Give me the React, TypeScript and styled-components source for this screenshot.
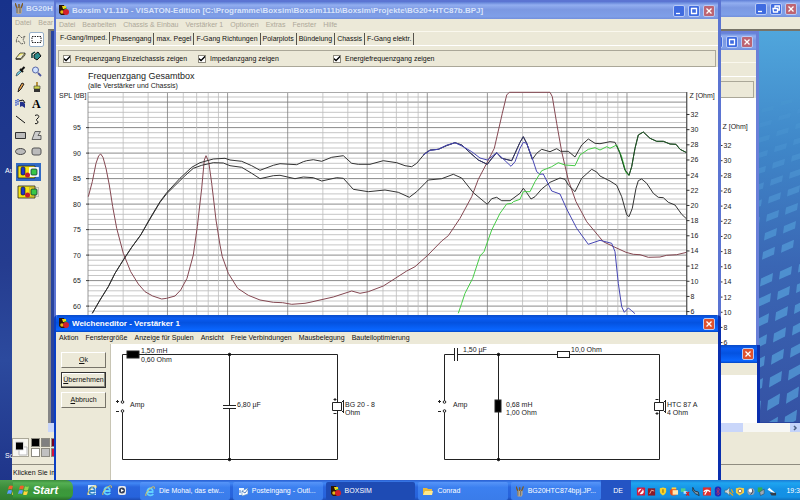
import React from "react";
import styled, { createGlobalStyle, css } from "styled-components";

const GlobalStyle = createGlobalStyle`
  * { box-sizing: border-box; }
  body { margin: 0; font: 7px/10px "Liberation Sans", Arial, sans-serif; color: #111; overflow: hidden; }
  button { font: inherit; padding: 0; margin: 0; border: 0; background: none; color: inherit; }
  svg { display: block; }
  svg text { font-family: "Liberation Sans", Arial, sans-serif; }
`;

const face = "#ece9d8";

const Screen = styled.main`
  display: flex;
  flex-direction: column;
  height: 100vh;
  background: #3a5bb0;
`;

const Desktop = styled.div`
  position: relative;
  display: flex;
  flex: 1;
  min-height: 0;
  overflow: hidden;
`;

const DesktopStrip = styled.div`
  display: flex;
  flex-direction: column;
  justify-content: space-between;
  flex: 0 0 12px;
  padding: 166px 0 19px 5px;
  overflow: hidden;
  color: #fff;
  background: linear-gradient(#17328b, #253c8f 55%, #2c4a9e 75%, #1f358a);
`;

const TitleBar = styled.header<{ $active?: boolean; $height: number }>`
  display: flex;
  align-items: center;
  gap: 3px;
  height: ${(p) => p.$height}px;
  padding: 0 3px;
  overflow: hidden;
  white-space: nowrap;
  color: ${(p) => (p.$active ? "#fff" : "#d8e4fb")};
  font-size: 8px;
  font-weight: bold;
  background: ${(p) =>
    p.$active
      ? "linear-gradient(#0a4bc8, #0a5cf2 20%, #0452e0 45%, #0a66ff 88%, #0346c4)"
      : "linear-gradient(#5f7fd6, #92aef0 18%, #7b98e2 45%, #7f9fe8 85%, #728fdc)"};
`;

const Title = styled.h1`
  flex: 1;
  margin: 0;
  overflow: hidden;
  font-size: inherit;
  line-height: 12px;
`;

const CaptionButton = styled.button<{ $kind: "blue" | "red" | "dimRed" }>`
  display: grid;
  place-items: center;
  flex: 0 0 12px;
  height: 12px;
  border: 1px solid #b9caf5;
  border-radius: 2px;
  background: ${(p) => ({ blue: "#3f6be0", red: "#e0512c", dimRed: "#bd6472" })[p.$kind]};
`;

const MenuBar = styled.nav<{ $dim?: boolean }>`
  display: flex;
  align-items: center;
  gap: 7px;
  height: 12px;
  padding: 0 3px;
  overflow: hidden;
  white-space: nowrap;
  color: ${(p) => (p.$dim ? "#aca899" : "#111")};
  background: ${face};
`;

const PaintWindow = styled.section`
  display: flex;
  flex: 1;
  flex-direction: column;
  min-width: 0;
  background: ${face};
`;

const PaintBody = styled.div`
  display: flex;
  flex: 1;
  min-height: 0;
`;

const Toolbox = styled.div`
  display: flex;
  flex-direction: column;
  align-items: center;
  flex: 0 0 36px;
  padding: 3px 3px 0 0;
`;

const ToolGrid = styled.div`
  display: grid;
  grid-template-columns: 15px 15px;
  grid-auto-rows: 15px;
  gap: 1px;
  margin-bottom: 4px;
`;

const Tool = styled.button<{ $selected?: boolean }>`
  display: grid;
  place-items: center;
  ${(p) => p.$selected && css`background: #fff; border: 1px solid #98b0c8; border-radius: 2px;`}
`;

const ToolOption = styled.button<{ $selected?: boolean }>`
  display: grid;
  place-items: center;
  width: 25px;
  height: 18px;
  margin-bottom: 2px;
  background: ${(p) => (p.$selected ? "#316ac5" : "transparent")};
`;

const CanvasColumn = styled.div`
  display: flex;
  flex: 1;
  flex-direction: column;
  min-width: 0;
`;

const Canvas = styled.div`
  position: relative;
  flex: 1;
  overflow: hidden;
  border-left: 3px solid #858585;
  border-top: 2px solid #777468;
  background: #29449d;
`;

const Wallpaper = styled.svg`
  position: absolute;
  top: 0;
  right: 0;
  width: 42px;
  height: 391px;
`;

const HorizontalScroll = styled.div`
  display: flex;
  justify-content: flex-end;
  height: 9px;
  background: linear-gradient(90deg, #c9d6fa 695px, #f7f7f4 695px);
`;

const ScrollButton = styled.button`
  display: grid;
  place-items: center;
  width: 10px;
  height: 9px;
  background: #c3d3fa;
`;

const PaletteBar = styled.div`
  display: flex;
  align-items: flex-start;
  gap: 2px;
  height: 33px;
  padding: 6px 0 0;
  border-bottom: 1px solid #8f8c80;
`;

const CurrentColors = styled.div`
  width: 17px;
  height: 19px;
  background: #f7f6f0;
  border: 1px solid #aaa798;
`;

const Swatches = styled.div`
  display: grid;
  grid-template-columns: repeat(3, 9px);
  grid-auto-rows: 9px;
  gap: 1px;
`;

const Swatch = styled.button<{ $color: string }>`
  border: 1px solid #8c8a80;
  background: ${(p) => p.$color};
`;

const StatusBar = styled.footer`
  height: 15px;
  padding: 3px 1px;
  overflow: hidden;
  white-space: nowrap;
`;

const AppWindow = styled.section`
  position: absolute;
  top: 0;
  bottom: 0;
  left: 54px;
  right: 79px;
  border: 2px solid #5b74d2;
  border-right-width: 3px;
  background: #fff;
`;

const BackWindow = styled.section`
  position: absolute;
  top: 0;
  bottom: 0;
  left: 42px;
  right: 41px;
  border: 2px solid #6a80d8;
  border-right-width: 3px;
  background: #fff;
`;

const Sheet = styled.div`
  background: ${face};
`;

const Tabs = styled.div`
  display: flex;
  align-items: flex-end;
  height: 15px;
  padding-left: 2px;
  border-top: 1px solid #faf8ee;
  border-bottom: 1px solid #fff;
  overflow: hidden;
`;

const Tab = styled.button<{ $selected?: boolean }>`
  height: 12px;
  padding: 0 2px;
  line-height: 10px;
  white-space: nowrap;
  border-right: 1px solid #55534b;
  ${(p) => p.$selected && css`align-self: flex-start;`}
`;

const Options = styled.div`
  display: flex;
  align-items: center;
  height: 17px;
  margin: 4px 2px 0;
  border: 1px solid #aaa798;
`;

const Option = styled.label<{ $width: number }>`
  display: flex;
  align-items: center;
  gap: 4px;
  flex: 0 1 ${(p) => p.$width}px;
  padding-left: 4px;
  white-space: nowrap;
`;

const Tick = styled.input`
  appearance: none;
  display: grid;
  place-items: center;
  width: 8px;
  height: 8px;
  margin: 0;
  border: 1px solid #8d8a7e;
  background: #fff;
  &:checked::before {
    content: "";
    width: 6px;
    height: 6px;
    background: #000;
    clip-path: polygon(0 40%, 35% 65%, 100% 0, 100% 35%, 35% 100%, 0 70%);
  }
`;

const Drawing = styled.svg`
  width: 100%;
  height: auto;
`;

const AxisDrawing = styled.svg`
  width: 40px;
  height: 250px;
  margin-left: auto;
`;

const EditorWindow = styled.section`
  position: absolute;
  top: 315px;
  bottom: 0;
  left: 54px;
  right: 79px;
  display: flex;
  flex-direction: column;
  border-left: 2px solid #0a3fc4;
  border-right: 3px solid #0a2fae;
  border-radius: 4px 4px 0 0;
  overflow: hidden;
  background: #fff;
`;

const BackEditor = styled.section`
  position: absolute;
  top: 314px;
  bottom: 0;
  left: 42px;
  right: 40px;
  border-right: 3px solid #0a2fae;
  background: #fff;
`;

const EditorBody = styled.div`
  display: flex;
  flex: 1;
  min-height: 0;
`;

const ButtonPanel = styled.div`
  display: flex;
  flex-direction: column;
  gap: 4px;
  flex: 0 0 55px;
  padding: 8px 4px 0 5px;
  border-right: 1px solid #c8c5b4;
  background: ${face};
`;

const PushButton = styled.button<{ $default?: boolean }>`
  height: 16px;
  border: 1px solid;
  border-color: ${(p) => (p.$default ? "#333" : "#fff #77746a #77746a #fff")};
  box-shadow: ${(p) => (p.$default ? "inset -1px -1px #8d8a7e, inset 1px 1px #fff" : "none")};
`;

const CircuitArea = styled.div`
  flex: 1;
  min-width: 0;
`;

const Taskbar = styled.footer`
  display: flex;
  align-items: stretch;
  height: 20px;
  overflow: hidden;
  color: #fff;
  background: linear-gradient(#2a5fd0, #4288f5 15%, #2a66de 35%, #2663dc 85%, #1d4cb4);
`;

const StartEdge = styled.div`
  display: grid;
  place-items: center end;
  flex: 0 0 13px;
  background: linear-gradient(#4fa04e, #3b8c3a 40%, #2f7c30);
`;

const StartButton = styled.button`
  display: flex;
  align-items: center;
  gap: 3px;
  flex: 0 0 60px;
  padding-left: 5px;
  border-radius: 0 7px 7px 0;
  font: italic bold 11px/18px "Liberation Sans", Arial, sans-serif;
  background: linear-gradient(#3a8a3a, #55b053 15%, #3c973b 50%, #3a9a3a 80%, #2a6f2b);
`;

const QuickLaunch = styled.div`
  display: flex;
  align-items: center;
  justify-content: center;
  gap: 5px;
  flex: 0 0 67px;
`;

const Tasks = styled.div`
  display: grid;
  grid-template-columns: repeat(5, minmax(0, 1fr));
  gap: 3px;
  flex: 0 1 461px;
  padding-top: 2px;
`;

const Task = styled.button<{ $active?: boolean }>`
  display: flex;
  align-items: center;
  gap: 4px;
  padding: 0 5px;
  overflow: hidden;
  white-space: nowrap;
  border-radius: 2px;
  background: ${(p) => (p.$active ? "#1e4bb4" : "linear-gradient(#5795f8, #3c80f0 30%, #3a7cea)")};
`;

const Language = styled.button`
  flex: 0 0 30px;
  padding: 2px 0 0 4px;
  background: #2454c4;
`;

const Tray = styled.div`
  display: flex;
  align-items: center;
  gap: 1px;
  flex: 1 0 169px;
  padding: 2px 0 0 5px;
  overflow: hidden;
  white-space: nowrap;
  background: linear-gradient(#1a7ad4, #1fa5f0 15%, #1592e6 45%, #1390e4 85%, #0f72c0);
`;

const Clock = styled.time`
  padding-left: 8px;
`;

/* ---------- icons ---------- */

const BoxsimIcon = () => (
  <svg width="10" height="11" viewBox="0 0 10 11">
    <path d="M0 0h5l1 3v7H2L0 8z" fill="#2a1608" />
    <path d="M3 1h4v3H4z" fill="#f0d818" />
    <circle cx="3" cy="7" r="1.8" fill="#e8b818" />
    <circle cx="7" cy="7" r="3" fill="#d4202c" />
    <path d="M5 4l3-1" stroke="#39a339" />
  </svg>
);

const PaintIcon = () => (
  <svg width="8" height="11" viewBox="0 0 8 11">
    <path d="M1 4h6v5l-1 2H2L1 9z" fill="#b9a88c" />
    <path d="M2 5L0 0M4 5V1M6 5l2-5" stroke="#7d5a22" strokeWidth="1.4" />
    <path d="M2 5v5M5 5v5" stroke="#5c656e" />
  </svg>
);

const IeIcon = ({ box = false }: { box?: boolean }) => (
  <svg width="10" height="11" viewBox="0 0 10 11">
    {box && <path d="M1 0h8v10H1z" fill="#d8ecff" />}
    <path d="M8.5 6H2.7a2.6 2.6 0 1 1 5-.8M8.3 8A3.5 3.5 0 0 1 2 6" fill="none" stroke={box ? "#3484c8" : "#62d0ff"} strokeWidth="1.8" />
    <path d="M1 10C-1 8 7-1 9.4 1c.4.5 0 1.300-.4 2" fill="none" stroke="#f0cb42" strokeWidth=".9" />
  </svg>
);

const FlagIcon = ({ cut = false }: { cut?: boolean }) => (
  <svg width={cut ? 6 : 12} height="12" viewBox={cut ? "0 0 6 12" : "0 0 12 12"}>
    <path d="M2 2q2-1 4 0L5 5.500q-2-1-4 0z" fill="#f0602c" />
    <path d="M7 2.300q2 1 4 0L10 6q-2 1-4 0z" fill="#8fd84c" />
    <path d="M1 6.500q2-1 4 0L4 10q-2-1-4 0z" fill="#5b9dff" />
    <path d="M6 7q2 1 4 0l-1 3.500q-2 1-4 0z" fill="#ffd43a" />
  </svg>
);

const MediaIcon = () => (
  <svg width="10" height="11" viewBox="0 0 10 11">
    <rect x="1" y="1" width="8" height="9" rx="2" fill="#e6e9ee" />
    <circle cx="5" cy="5.500" r="3" fill="#34405a" />
    <path d="M4 4l3 1.500L4 7z" fill="#fff" />
  </svg>
);

const MailIcon = () => (
  <svg width="10" height="11" viewBox="0 0 10 11">
    <path d="M1 2h5v7H1z" fill="#e9f4ff" />
    <path d="M4 5l6-3v6l-6 2z" fill="#fff" stroke="#5d8fc0" strokeWidth=".6" />
    <path d="M2 4v3M4 5l3 2 3-4" stroke="#2c63b4" fill="none" strokeWidth=".8" />
  </svg>
);

const FolderIcon = () => (
  <svg width="10" height="9" viewBox="0 0 10 9">
    <path d="M0 1h4l1 1h4v6H0z" fill="#e8b93c" />
    <path d="M2 4h8L9 8H0z" fill="#ffe98e" />
  </svg>
);

const CaptionGlyph = ({ d }: { d: string }) => (
  <svg width="8" height="8" viewBox="0 0 8 8">
    <path d={d} fill="none" stroke="#fff" strokeWidth="1.3" />
  </svg>
);

const minimizeGlyph = "M1 6.500h4";
const maximizeGlyph = "M1 1.500h6M1.500 1v6M1 6.500h6M6.500 1v6";
const restoreGlyph = "M1 3.500h4.500v3.500H1.500zM3 3V1h4.300v4H6";
const closeGlyph = "M1.500 1.500l5 5M6.500 1.500l-5 5";

const toolGlyphs: { name: string; art: React.ReactNode }[] = [
  { name: "Freihand auswählen", art: <path d="M4 1L2 4 1 8l3-1 2 3 4-1-2-3 2-4-3 2z" fill="none" stroke="#222" strokeDasharray="1.500 1" strokeWidth=".8" /> },
  { name: "Auswählen", art: <path d="M1 2.500h9v6H1z" fill="none" stroke="#222" strokeDasharray="1.500 1" /> },
  { name: "Radierer", art: <path d="M1 8l4-5h5L6 8.500H1zM1 8v1.500h5L10 5V3" fill="#f7ef7a" stroke="#333" strokeWidth=".8" /> },
  { name: "Füllen", art: <g><path d="M3 5l4-3 3 4-4 4-3-2z" fill="#2a8c8c" stroke="#111" /><path d="M1 8V4l3-2" fill="none" stroke="#0b3b3b" strokeWidth="1.500" /></g> },
  { name: "Farbe auswählen", art: <g><path d="M1 10l1-3 4-3 1 1-4 4z" fill="#6fd3e6" stroke="#345" strokeWidth=".7" /><path d="M5 3l3 3M6.500 4l3-3" stroke="#111" strokeWidth="2" /></g> },
  { name: "Lupe", art: <g><circle cx="4.500" cy="4" r="3" fill="#cfe2ff" stroke="#5966a5" /><path d="M7 7l3 3" stroke="#4b55a0" strokeWidth="1.800" /></g> },
  { name: "Stift", art: <path d="M3 10l1-4 3-5 2 1-3 5z" fill="#e8a04a" stroke="#222" /> },
  { name: "Pinsel", art: <g><path d="M5 0h2v4H5z" fill="#b69142" /><path d="M3 4h6v3H3z" fill="#cfd44d" stroke="#333" strokeWidth=".6" /><path d="M3 7h6v3H3z" fill="#333" /></g> },
  { name: "Airbrush", art: <g><path d="M5 4q4-1 5 2v4L7 8 5 9z" fill="#22318c" /><path d="M1 2v6M3 1v6" stroke="#3658d0" strokeWidth="1.500" strokeDasharray="1.500 .6" /><path d="M4 3l4-1 2 3" stroke="#111" fill="none" /></g> },
  { name: "Text", art: <text x="1" y="10" fontSize="12" fontWeight="bold" style={{ fontFamily: "Liberation Serif, serif" }}>A</text> },
  { name: "Linie", art: <path d="M1 2l9 7" stroke="#111" /> },
  { name: "Kurve", art: <path d="M4 1.500C7 0 9 2 7 4L5.500 5.500C5 7 7 6.500 7 8S5.500 10 4 9.500" fill="none" stroke="#111" /> },
  { name: "Rechteck", art: <path d="M.5 2.500h10v6H.500z" fill="#bbb" stroke="#333" /> },
  { name: "Vieleck", art: <path d="M4 1.500h5.500L7 5.500h3v4H1z" fill="#ccc" stroke="#444" strokeWidth=".8" /> },
  { name: "Ellipse", art: <ellipse cx="5.500" cy="5.500" rx="5" ry="3" fill="#bbb" stroke="#444" /> },
  { name: "Abgerundetes Rechteck", art: <rect x="1" y="2" width="9" height="7" rx="2" fill="#bbb" stroke="#555" /> },
];

const ShapesIcon = ({ opaque }: { opaque?: boolean }) => (
  <svg width="23" height="14" viewBox="0 0 23 14">
    <path d="M1 1h17v12H1z" fill="#f7e414" stroke="#222" strokeWidth=".8" />
    <rect x="4" y="2" width="4" height="8" rx="1.500" fill="#1c38c8" stroke="#111" strokeWidth=".6" />
    <path d="M12.500 2.500h9v9h-9z" fill={opaque ? "#fff" : "none"} stroke={opaque ? "#fff" : "#777"} strokeDasharray={opaque ? undefined : "1 1"} strokeWidth=".8" />
    <circle cx="10.500" cy="10" r="2.500" fill="#c81c2c" />
    <rect x="14" y="4" width="6" height="6" rx="1" fill="#38c848" stroke="#133" strokeWidth=".8" />
  </svg>
);

const trayArt: { name: string; art: React.ReactNode }[] = [
  { name: "Audio", art: <g><rect x="1" y="1" width="9" height="9" rx="1" fill="#d11c3c" /><circle cx="5.500" cy="5.500" r="3" fill="#fff" /><path d="M7 3L3 8" stroke="#d11c3c" strokeWidth="2" /></g> },
  { name: "Monitor", art: <g><rect x="1" y="2" width="8" height="8" fill="#8c1c28" /><path d="M3 8l2-4 3 1" stroke="#f5b7a2" /></g> },
  { name: "Sicherheit", art: <g><path d="M2 2l3.500-1L9 2v4q-1 3-3.500 4Q3 9 2 6z" fill="#f6d22c" /><path d="M5.500 3v4" stroke="#775b00" /></g> },
  { name: "Update", art: <g><circle cx="5" cy="6" r="4" fill="#e8501c" /><path d="M4 4h6v5H4z" fill="#ffe7b0" /><path d="M3 2h5" stroke="#ffd23c" strokeWidth="2" /></g> },
  { name: "Netzwerk", art: <g><path d="M1 2h5v4H1z" fill="#4fd08c" /><path d="M4 5h4v3H4z" fill="#b9e4ff" /><path d="M7 6l3 4M10 6L7 10" stroke="#d91c1c" strokeWidth="1.500" /></g> },
  { name: "Gerät", art: <path d="M2 1l2 4 4 1 1 4-4-2-3-3z" fill="#7d98a8" stroke="#234" /> },
  { name: "AntiVir", art: <g><rect x="1" y="1" width="9" height="9" fill="#df2e2e" /><path d="M2 6a4 4 0 0 1 7 0M6 4L3 9" stroke="#fff" strokeWidth="1.300" fill="none" /></g> },
  { name: "Bluetooth", art: <g><rect x="2" y="0" width="7" height="11" rx="3" fill="#1c2cb8" /><path d="M3.500 3.500l4 4-2 2v-8l2 2-4 4" stroke="#c9375c" fill="none" strokeWidth=".8" /></g> },
  { name: "Lautsprecher", art: <g><path d="M1 4h2l3-3v9L3 7H1z" fill="#cfd8dc" stroke="#455" strokeWidth=".5" /><path d="M6 6l4 4M8 3l2 4" stroke="#d9a52c" strokeWidth="1.500" /></g> },
  { name: "Schild", art: <g><path d="M1 2l4-1 5 1v5l-5 3-4-3z" fill="#f1cf48" /><circle cx="5.500" cy="5" r="2" fill="#fff" stroke="#865" /></g> },
  { name: "Wiedergabe", art: <g><circle cx="5.500" cy="5.500" r="4" fill="#8fa0b4" /><circle cx="5" cy="4.500" r="2" fill="#fff" /><path d="M7 3q2 3-2 6" stroke="#445" fill="none" /></g> },
  { name: "Hardware", art: <g><path d="M2 1h5v5H2z" fill="#36ad50" /><path d="M4 6l5-3v5L5 10z" fill="#9aa9b8" stroke="#345" strokeWidth=".6" /></g> },
  { name: "WLAN", art: <g><path d="M1 3l5 3M2 2l7 6" stroke="#fff" strokeWidth="1.500" /><path d="M3 7h7v3H5z" fill="#333c48" /></g> },
];

/* ---------- frequency response chart ---------- */

const decade = 199.7;
const freqX = (hz: number) => 88 + decade * Math.log10(hz / 20);
const splY = (db: number) => 127.6 + (95 - db) * 5.1;
const ohmY = (ohm: number) => 114.5 + (32 - ohm) * 7.58;

const frequencies = [
  20, 30, 40, 50, 60, 70, 80, 90,
  100, 200, 300, 400, 500, 600, 700, 800, 900,
  1000, 2000, 3000, 4000, 5000, 6000, 7000, 8000, 9000,
  10000, 15000, 20000,
].filter((hz) => hz !== 15000);
const strongFrequencies = [20, 50, 100, 200, 500, 1000, 2000, 5000, 10000, 20000];
const levels = Array.from({ length: 43 }, (_, i) => 101 - i);

/* Each run holds an origin and points measured in thirds of a chart unit. */
type Run = [number, number, string];
const trace = (runs: Run[]) =>
  runs
    .flatMap(([ox, oy, pts]) =>
      pts.split(" ").map((p) => {
        const [x, y] = p.split(",").map(Number);
        return `${(ox + x / 3).toFixed(1)},${(oy + y / 3).toFixed(1)}`;
      })
    )
    .join(" ");

const impedance = trace([
  [60, 60, "85,410 97,365 108,310 116,287 122,282 129,292 138,325 148,375 158,440 170,505 190,580 212,635 235,672 255,695 278,708 305,717 320,715 345,708 362,690 381,655 400,585 412,500 425,385 433,300 438,287 446,305 455,370 468,480 480,555 487,590 505,640 533,685 565,706 600,720 640,727 668,728 695,733 735,730"],
  [300, 80, "30,667 60,660 100,651 155,633 180,640 205,635 250,618 320,573 345,560 382,527 425,483 445,467 480,415 515,350 535,298 560,250 583,205 607,100 620,45 628,37"],
  [500, 80, "28,37 150,37 157,50 170,130 185,215 205,300 228,365 260,425 310,485 345,502 378,517 400,523 420,524 445,532 480,531 500,526 530,524 560,517"],
]);

const totalLevel = trace([
  [60, 60, "97,760 120,720 145,680 165,640 190,600 215,562 242,525 270,475 300,425 320,398 360,355 395,322 420,308 460,297 495,295 510,300 545,304 575,317 600,331 640,316 660,311 710,314 730,305"],
  [300, 80, "20,242 40,239 65,244 95,232 130,227 155,250 175,253 210,253 250,242 290,248 315,257 335,260 350,250 375,220 390,210 415,208 440,197 465,188 485,195 510,218 535,240 562,253 575,235 590,218 605,235 635,242 660,187"],
  [500, 80, "70,170 80,190 97,238 110,220 125,208 150,215 170,206 182,214 205,214 225,231 245,195 265,177 285,190 300,191 330,185 345,187 360,220 375,270 387,286 395,260 405,205 415,165 430,156 450,175 470,184 490,184 510,192 528,193 540,208 560,218"],
]);

const energyLevel = trace([
  [60, 60, "97,760 120,720 145,680 165,640 190,600 215,562 242,525 270,477 300,427 320,401 375,347 400,325 425,316 460,308 490,309 510,317 545,322 575,340 600,356 640,347 660,346 705,356"],
  [300, 80, "10,291 40,293 65,303 110,293 130,295 160,328 205,335 255,330 295,337 328,352 350,335 385,300 425,296 460,283 485,294 520,338 562,373 575,356 590,352 605,362 630,362 660,340"],
  [500, 80, "70,325 80,338 93,357 105,350 125,327 150,307 180,294 195,298 205,315 225,335 245,295 275,268 290,276 300,288 330,303 350,316 365,350 380,404 387,410 397,385 408,325 415,302 425,297 440,310 460,340 475,352 490,353 505,367 525,375 545,403 560,417"],
]);

const wooferLevel = trace([
  [300, 80, "370,225 390,211 415,208 440,196 465,188 490,200 515,215 540,234 562,240 590,218 610,237 633,259 645,245 660,205"],
  [500, 80, "70,187 80,190 97,235 110,275 120,283 130,282 155,333 180,342 200,387 230,445 265,493 300,481 335,490 345,515 355,610 365,680 373,697 385,684 395,692 405,701"],
]);

const wooferShadow = trace([[300, 80, "370,225 390,211 415,208 440,196 465,188 485,195 510,218 535,240 562,253 590,218 605,235 635,242 660,187 670,170 680,190 697,238"]]);

const tweeterLevel = trace([
  [300, 80, "475,700 485,670 495,640 518,595 540,528 552,515 575,450 600,400 620,372 635,370 640,365 660,358"],
  [500, 80, "70,335 90,335 105,305 125,272 155,260 175,248 195,255 225,257 240,225 265,208 285,203 300,210 320,200 330,205 350,195 365,230 378,278 387,286"],
]);

const tweeterTail = trace([[500, 80, "350,197 360,220 375,270 387,286 395,260 405,205 415,165 430,156 450,175 470,184 490,184 510,192 528,193 540,208 560,218"]]);

const evenOhms = [32, 30, 28, 26, 24, 22, 20, 18, 16, 14, 12, 10, 8, 6];

const OhmAxis = ({ x }: { x: number }) => (
  <g>
    <path d={`M${x} 92V317`} stroke="#444" strokeWidth=".8" />
    <text x={x + 3} y="97.500" fontSize="7">Z [Ohm]</text>
    {evenOhms.map((ohm) => (
      <g key={ohm}>
        <path d={`M${x} ${ohmY(ohm)}h3`} stroke="#333" />
        <text x={x + 4} y={ohmY(ohm) + 2.5} fontSize="7">{ohm}</text>
      </g>
    ))}
  </g>
);

const ResponseChart = () => (
  <Drawing viewBox="56 67 662 250" fill="none" fontSize="7">
    {levels.map((db) => (
      <path key={db} d={`M88 ${splY(db)}H686.500`} stroke={db % 5 === 0 ? "#8a8a8a" : "#c6c6c6"} />
    ))}
    {frequencies.map((hz) => (
      <path key={hz} d={`M${freqX(hz)} 92V317`} stroke={strongFrequencies.includes(hz) ? "#7e7e7e" : "#bdbdbd"} strokeWidth=".8" />
    ))}
    <path d="M88 92.500H686" stroke="#aaa" />
    <polyline points={impedance} stroke="#854852" />
    <polyline points={energyLevel} stroke="#333" />
    <polyline points={totalLevel} stroke="#333" />
    <polyline points={wooferShadow} stroke="#33366e" strokeWidth=".9" />
    <polyline points={wooferLevel} stroke="#4646b4" />
    <polyline points={tweeterLevel} stroke="#46cc46" />
    <polyline points={tweeterTail} stroke="#1c5a24" />
    <g fill="#222">
      <text x="88" y="78.500" fontSize="9">Frequenzgang Gesamtbox</text>
      <text x="88" y="87.500">(alle Verstärker und Chassis)</text>
      <text x="59" y="97.500">SPL [dB]</text>
      {[95, 90, 85, 80, 75, 70, 65, 60].map((db) => (
        <g key={db}>
          <path d={`M86 ${splY(db)}h3`} stroke="#444" />
          <text x="73" y={splY(db) + 2.5}>{db}</text>
        </g>
      ))}
      <OhmAxis x={686.5} />
    </g>
  </Drawing>
);

/* ---------- crossover circuit ---------- */

const Amplifier = ({ x }: { x: number }) => (
  <g>
    <circle cx={x} cy="402" r="1.300" fill="#fff" />
    <circle cx={x} cy="411" r="1.300" fill="#fff" />
    <path d={`M${x - 6.5} 401.500h3M${x - 5} 400v3M${x - 6.5} 411.500h3`} />
  </g>
);

const Speaker = ({ x, flipped = false }: { x: number; flipped?: boolean }) => (
  <g>
    <path d={`M${x - 5} 402.500h9v8h-9zM${x + 4} 402.500l2-2v12l-2-2`} fill="#fff" />
    <path d={`M${x - 4} 399.500h3M${x - 4} 413.500h3M${x - 2.5} ${flipped ? 412 : 398}v3M${x + 6} 400v13`} />
  </g>
);

const CircuitDiagram = () => (
  <Drawing viewBox="111 344 607 136" fill="none" stroke="#222">
    <path d="M122.500 401v-46.500h215V402M122.500 412v47.500h215V411M229.500 354.500v51M229.500 408.500v51" />
    <path d="M223 405.500h13M223 408.500h13" />
    <path d="M444.500 401v-46.500h10M457.500 354.500h202V402M444.500 412v47.500h215V411M498.500 354.500v105" />
    <path d="M454.500 348v13M457.500 348v13" />
    <rect x="127" y="351" width="12" height="7" fill="#000" />
    <rect x="495" y="400" width="6" height="12" fill="#000" />
    <rect x="557.500" y="351.500" width="12" height="6" fill="#fff" />
    <g fill="#000">
      {[229.5, 498.5].map((x) => (
        <g key={x}>
          <circle cx={x} cy="354.500" r="1.300" />
          <circle cx={x} cy="459.500" r="1.300" />
        </g>
      ))}
    </g>
    <Amplifier x={122.5} />
    <Amplifier x={444.5} />
    <Speaker x={337.5} />
    <Speaker x={659.5} flipped />
    <g fill="#222" stroke="none" fontSize="7">
      <text x="141" y="353">1,50 mH</text>
      <text x="141" y="362">0,60 Ohm</text>
      <text x="130" y="407">Amp</text>
      <text x="237" y="407">6,80 µF</text>
      <text x="345" y="407">BG 20 - 8</text>
      <text x="345" y="415">Ohm</text>
      <text x="463" y="352">1,50 µF</text>
      <text x="453" y="407">Amp</text>
      <text x="506" y="407">0,68 mH</text>
      <text x="506" y="415">1,00 Ohm</text>
      <text x="571" y="352">10,0 Ohm</text>
      <text x="667" y="407">HTC 87 A</text>
      <text x="667" y="415">4 Ohm</text>
    </g>
  </Drawing>
);

const WallpaperArt = () => (
  <Wallpaper viewBox="0 0 42 391" preserveAspectRatio="none">
    <defs>
      <linearGradient id="sky" x2="0" y2="1">
        <stop offset="0" stopColor="#50a6dc" />
        <stop offset=".3" stopColor="#3f86c8" />
        <stop offset=".6" stopColor="#3a66b4" />
        <stop offset="1" stopColor="#3552a4" />
      </linearGradient>
    </defs>
    <path d="M0 0h42v391H0z" fill="url(#sky)" />
    {Array.from({ length: 18 }, (_, row) =>
      Array.from({ length: 4 }, (_, col) => {
        const size = 0.5 + row * 0.04;
        const y = 75 + row * 14 + row * row * 0.28 - col * 7;
        const x = 4 + col * 19 - ((row * 2) % 19);
        return <path key={`${row}-${col}`} d={`M${x} ${y + 5 * size}l12 ${-6 * size}l-1 ${9 * size}l-12 ${6 * size}z`} fill="#57a3dc" opacity={Math.min(0.7, 0.1 + row * 0.06)} />;
      })
    )}
  </Wallpaper>
);

const SystemButtons = ({ active = false, only = false, restore = false }: { active?: boolean; only?: boolean; restore?: boolean }) => (
  <>
    {!only && (
      <>
        <CaptionButton $kind="blue" aria-label="Minimieren"><CaptionGlyph d={minimizeGlyph} /></CaptionButton>
        <CaptionButton $kind="blue" aria-label="Maximieren"><CaptionGlyph d={restore ? restoreGlyph : maximizeGlyph} /></CaptionButton>
      </>
    )}
    <CaptionButton $kind={active ? "red" : "dimRed"} aria-label="Schließen"><CaptionGlyph d={closeGlyph} /></CaptionButton>
  </>
);

const tabs = ["F-Gang/Imped.", "Phasengang", "max. Pegel", "F-Gang Richtungen", "Polarplots", "Bündelung", "Chassis", "F-Gang elektr."];
const boxsimMenu = ["Datei", "Bearbeiten", "Chassis & Einbau", "Verstärker 1", "Optionen", "Extras", "Fenster", "Hilfe"];
const editorMenu = ["Aktion", "Fenstergröße", "Anzeige für Spulen", "Ansicht", "Freie Verbindungen", "Mausbelegung", "Bauteiloptimierung"];
const palette = ["#000", "#808080", "#7a0022", "#fff", "#c0c0c0", "#d4143c"];

export default function App() {
  return (
    <Screen>
      <GlobalStyle />
      <Desktop>
        <DesktopStrip><span>Au</span><span>Sc</span></DesktopStrip>
        <PaintWindow>
          <TitleBar $height={17}>
            <PaintIcon />
            <Title>BG20H</Title>
            <SystemButtons restore />
          </TitleBar>
          <MenuBar $dim><span>Datei</span><span>Bear</span></MenuBar>
          <PaintBody>
            <Toolbox>
              <ToolGrid>
                {toolGlyphs.map((tool, i) => (
                  <Tool key={tool.name} aria-label={tool.name} $selected={i === 1}>
                    <svg width="11" height="11" viewBox="0 0 11 11">{tool.art}</svg>
                  </Tool>
                ))}
              </ToolGrid>
              <ToolOption $selected aria-label="Deckend"><ShapesIcon opaque /></ToolOption>
              <ToolOption aria-label="Transparent"><ShapesIcon /></ToolOption>
            </Toolbox>
            <CanvasColumn>
              <Canvas>
                <WallpaperArt />
                <BackWindow>
                  <TitleBar $height={17}><Title /><SystemButtons /></TitleBar>
                  <MenuBar $dim />
                  <Sheet><Tabs /><Options /></Sheet>
                  <AxisDrawing viewBox="683 67 40 250" fill="#222"><OhmAxis x={686.5} /></AxisDrawing>
                </BackWindow>
                <BackEditor>
                  <TitleBar $active $height={18}><Title /><SystemButtons active only /></TitleBar>
                  <MenuBar />
                </BackEditor>
              </Canvas>
              <HorizontalScroll>
                <ScrollButton aria-label="Nach rechts"><svg width="6" height="6" viewBox="0 0 6 6"><path d="M2 1l2 2-2 2" fill="none" stroke="#4d6185" strokeWidth="1.500" /></svg></ScrollButton>
              </HorizontalScroll>
            </CanvasColumn>
          </PaintBody>
          <PaletteBar>
            <CurrentColors>
              <svg width="15" height="17" viewBox="0 0 15 17">
                <path d="M6 8h8v8H6z" fill="#fff" stroke="#bbb" />
                <path d="M2.500 3h8v8h-8z" fill="#000" stroke="#ddd" />
              </svg>
            </CurrentColors>
            <Swatches>{palette.map((c) => <Swatch key={c} $color={c} aria-label={c} />)}</Swatches>
          </PaletteBar>
          <StatusBar>Klicken Sie im</StatusBar>
        </PaintWindow>

        <AppWindow>
          <TitleBar $height={17}>
            <BoxsimIcon />
            <Title>Boxsim V1.11b - VISATON-Edition [C:\Programme\Boxsim\Boxsim111b\Boxsim\Projekte\BG20+HTC87b.BPJ]</Title>
            <SystemButtons />
          </TitleBar>
          <MenuBar $dim>{boxsimMenu.map((m) => <span key={m}>{m}</span>)}</MenuBar>
          <Sheet>
            <Tabs role="tablist">
              {tabs.map((t, i) => <Tab key={t} role="tab" aria-selected={i === 0} $selected={i === 0}>{t}</Tab>)}
            </Tabs>
            <Options>
              <Option $width={135}><Tick type="checkbox" defaultChecked />Frequenzgang Einzelchassis zeigen</Option>
              <Option $width={135}><Tick type="checkbox" defaultChecked />Impedanzgang zeigen</Option>
              <Option $width={135}><Tick type="checkbox" defaultChecked />Energiefrequenzgang zeigen</Option>
            </Options>
          </Sheet>
          <ResponseChart />
        </AppWindow>

        <EditorWindow>
          <TitleBar $active $height={17}>
            <BoxsimIcon />
            <Title>Weicheneditor - Verstärker 1</Title>
            <SystemButtons active only />
          </TitleBar>
          <MenuBar>{editorMenu.map((m) => <span key={m}>{m}</span>)}</MenuBar>
          <EditorBody>
            <ButtonPanel>
              <PushButton><u>O</u>k</PushButton>
              <PushButton $default><u>Ü</u>bernehmen</PushButton>
              <PushButton><u>A</u>bbruch</PushButton>
            </ButtonPanel>
            <CircuitArea><CircuitDiagram /></CircuitArea>
          </EditorBody>
        </EditorWindow>
      </Desktop>

      <Taskbar>
        <StartEdge><FlagIcon cut /></StartEdge>
        <StartButton><FlagIcon />Start</StartButton>
        <QuickLaunch><IeIcon box /><IeIcon /><MediaIcon /></QuickLaunch>
        <Tasks>
          <Task><IeIcon />Die Mohai, das etw...</Task>
          <Task><MailIcon />Posteingang - Outl...</Task>
          <Task $active><BoxsimIcon />BOXSIM</Task>
          <Task><FolderIcon />Conrad</Task>
          <Task><PaintIcon />BG20HTC874bpj.JP...</Task>
        </Tasks>
        <Language>DE</Language>
        <Tray>
          {trayArt.map((t) => (
            <svg key={t.name} width="10" height="11" viewBox="0 0 11 11" role="img" aria-label={t.name} fill="none">{t.art}</svg>
          ))}
          <Clock>19:3</Clock>
        </Tray>
      </Taskbar>
    </Screen>
  );
}
